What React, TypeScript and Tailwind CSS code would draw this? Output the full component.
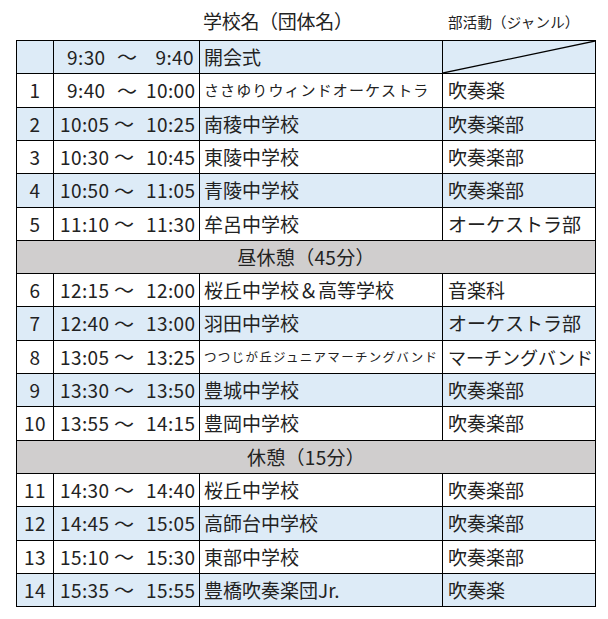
import React from "react";

type Row =
  | { kind: "slot"; no: string; start: string; end: string; name: string; nameSize?: string; genre: string; genreSmall?: boolean; blue: boolean; diag?: boolean }
  | { kind: "break"; label: string };

const rows: Row[] = [
  { kind: "slot", no: "", start: "9:30", end: "9:40", name: "開会式", genre: "", blue: true, diag: true },
  { kind: "slot", no: "1", start: "9:40", end: "10:00", name: "ささゆりウィンドオーケストラ", nameSize: "small", genre: "吹奏楽", blue: false },
  { kind: "slot", no: "2", start: "10:05", end: "10:25", name: "南稜中学校", genre: "吹奏楽部", blue: true },
  { kind: "slot", no: "3", start: "10:30", end: "10:45", name: "東陵中学校", genre: "吹奏楽部", blue: false },
  { kind: "slot", no: "4", start: "10:50", end: "11:05", name: "青陵中学校", genre: "吹奏楽部", blue: true },
  { kind: "slot", no: "5", start: "11:10", end: "11:30", name: "牟呂中学校", genre: "オーケストラ部", blue: false },
  { kind: "break", label: "昼休憩（45分）" },
  { kind: "slot", no: "6", start: "12:15", end: "12:00", name: "桜丘中学校＆高等学校", genre: "音楽科", blue: false },
  { kind: "slot", no: "7", start: "12:40", end: "13:00", name: "羽田中学校", genre: "オーケストラ部", blue: true },
  { kind: "slot", no: "8", start: "13:05", end: "13:25", name: "つつじが丘ジュニアマーチングバンド", nameSize: "tiny", genre: "マーチングバンド", genreSmall: true, blue: false },
  { kind: "slot", no: "9", start: "13:30", end: "13:50", name: "豊城中学校", genre: "吹奏楽部", blue: true },
  { kind: "slot", no: "10", start: "13:55", end: "14:15", name: "豊岡中学校", genre: "吹奏楽部", blue: false },
  { kind: "break", label: "休憩（15分）" },
  { kind: "slot", no: "11", start: "14:30", end: "14:40", name: "桜丘中学校", genre: "吹奏楽部", blue: false },
  { kind: "slot", no: "12", start: "14:45", end: "15:05", name: "高師台中学校", genre: "吹奏楽部", blue: true },
  { kind: "slot", no: "13", start: "15:10", end: "15:30", name: "東部中学校", genre: "吹奏楽部", blue: false },
  { kind: "slot", no: "14", start: "15:35", end: "15:55", name: "豊橋吹奏楽団Jr.", genre: "吹奏楽", blue: true },
];

// heights include bottom border
const heights = [33, 34, 33, 33, 34, 33, 33, 33, 34, 33, 33, 34, 33, 33, 34, 33, 33];

const font = { fontFamily: '"Noto Sans CJK JP", "Noto Sans", sans-serif' };

export default function App() {
  return (
    <div className="w-[608px] h-[619px] bg-white text-[#222]" style={font}>
      <div className="h-[40px] grid grid-cols-[38px_146px_243px_153px] ml-[16px]">
        <div />
        <div />
        <div className="pl-[3px] pt-[9px] text-[19px] tracking-[-0.3px] leading-[24px]">学校名（団体名）</div>
        <div className="pl-[5px] pt-[12px] text-[14.5px] tracking-[0.2px] leading-[20px]">部活動（ジャンル）</div>
      </div>
      <div className="ml-[16px] w-[580px] border-l border-t border-black">
        {rows.map((r, i) => {
          const h = heights[i] === 34 ? "h-[34px]" : "h-[33px]";
          if (r.kind === "break") {
            return (
              <div key={i} className={`${h} bg-[#d0cece] border-r border-b border-black flex items-center justify-center text-[19px] tracking-[0.3px]`}>
                {r.label}
              </div>
            );
          }
          const bg = r.blue ? "bg-[#ddebf7]" : "bg-white";
          const nameCls =
            r.nameSize === "small"
              ? "text-[15px] tracking-[1.1px]"
              : r.nameSize === "tiny"
              ? "text-[12.5px] tracking-[1.3px]"
              : "text-[19px]";
          const short = r.start.length === 4;
          const startCls = short ? "pl-[7px]" : "pl-0";
          const tildeCls = short ? "pl-[9px]" : "pl-[6px]";
          const genreCls = r.genreSmall ? "text-[18px]" : "text-[19px]";
          return (
            <div key={i} className={`${h} grid grid-cols-[37px_146px_243px_153px] ${bg}`}>
              <div className="border-r border-b border-black flex items-center justify-center text-[19px] tracking-[0.5px]">{r.no}</div>
              <div className="border-r border-b border-black flex items-center pl-[6px] text-[19px] tracking-[0.4px] whitespace-nowrap">
                <span className={`inline-block w-[48px] ${startCls}`}>{r.start}</span>
                <span className={`inline-block w-[38px] text-[20px] tracking-normal ${tildeCls}`}>～</span>
                <span className="inline-block w-[48px] text-right">{r.end}</span>
              </div>
              <div className={`border-r border-b border-black flex items-center pl-[4px] whitespace-nowrap overflow-hidden ${nameCls}`}>{r.name}</div>
              <div className={`relative border-r border-b border-black flex items-center pl-[5px] whitespace-nowrap overflow-hidden ${genreCls}`}>
                {r.genre}
                {r.diag && (
                  <svg className="absolute inset-0 w-full h-full" viewBox="0 0 152 33" preserveAspectRatio="none">
                    <line x1="0" y1="33" x2="152" y2="0" stroke="#000" strokeWidth="1.3" />
                  </svg>
                )}
              </div>
            </div>
          );
        })}
      </div>
    </div>
  );
}
